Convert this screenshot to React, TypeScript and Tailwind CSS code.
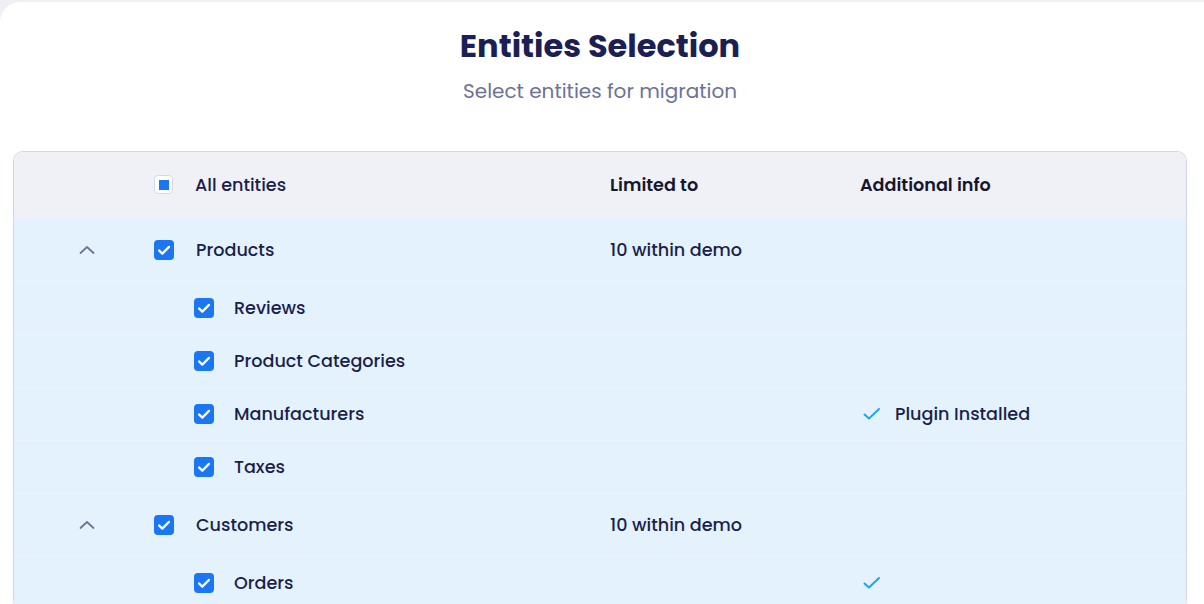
import { useState } from "react";

type Entity = {
  name: string;
  limit?: string;
  info?: string;
  showInfoCheck?: boolean;
  children?: Entity[];
};

const entities: Entity[] = [
  {
    name: "Products",
    limit: "10 within demo",
    children: [
      { name: "Reviews" },
      { name: "Product Categories" },
      { name: "Manufacturers", showInfoCheck: true, info: "Plugin Installed" },
      { name: "Taxes" },
    ],
  },
  {
    name: "Customers",
    limit: "10 within demo",
    children: [{ name: "Orders", showInfoCheck: true }],
  },
];

function CheckBox({ checked }: { checked: boolean }) {
  return (
    <span
      className={
        checked
          ? "flex h-5 w-5 shrink-0 items-center justify-center rounded-[4px] bg-[#1a76f2]"
          : "flex h-5 w-5 shrink-0 items-center justify-center rounded-[4px] border border-[#c9cdd9] bg-white"
      }
    >
      {checked && (
        <svg width="20" height="20" viewBox="0 0 20 20" fill="none">
          <path d="M5 10.4 8.3 13.6 15 6.9" stroke="white" strokeWidth="2.2" strokeLinecap="round" strokeLinejoin="round" />
        </svg>
      )}
    </span>
  );
}

function ChevronUp() {
  return (
    <svg width="16" height="10" viewBox="0 0 16 10" fill="none">
      <path d="M1.5 8 8 2l6.5 6" stroke="#6f7590" strokeWidth="1.8" strokeLinecap="round" strokeLinejoin="round" />
    </svg>
  );
}

function InfoCheck() {
  return (
    <svg width="18" height="14" viewBox="0 0 18 14" fill="none">
      <path d="M1.5 7.5 6 11.5 16 2" stroke="#1fa6ea" strokeWidth="2" strokeLinecap="round" strokeLinejoin="round" />
    </svg>
  );
}

function Row({ entity, child, open, onToggle }: { entity: Entity; child?: boolean; open?: boolean; onToggle?: () => void }) {
  return (
    <div
      className={
        child
          ? "flex h-[53px] items-center border-t border-[#ecf5fd] bg-[#e4f2fd]"
          : "flex h-[63px] items-center border-t border-[#ecf5fd] bg-[#e4f2fd]"
      }
    >
      <div className="flex w-[140px] shrink-0 pl-[65px]">
        {!child && (
          <button onClick={onToggle} className={open ? "" : "rotate-180"}>
            <ChevronUp />
          </button>
        )}
      </div>
      <div className={child ? "flex w-[456px] shrink-0 items-center gap-5 pl-10" : "flex w-[456px] shrink-0 items-center gap-[22px]"}>
        <CheckBox checked />
        <span className="text-[17.6px] font-medium text-[#1b1f4b]">{entity.name}</span>
      </div>
      <div className="w-[250px] shrink-0 text-[17.6px] font-medium text-[#1b1f4b]">{entity.limit}</div>
      <div className="flex items-center gap-[14px] pl-[3px]">
        {entity.showInfoCheck && <InfoCheck />}
        {entity.info && <span className="text-[17.6px] font-medium text-[#1b1f4b]">{entity.info}</span>}
      </div>
    </div>
  );
}

export default function App() {
  const [open, setOpen] = useState<Record<string, boolean>>({ Products: true, Customers: true });

  return (
    <div className="min-h-screen bg-[#eef0f5] pt-[2px] font-['Poppins','Inter',sans-serif]">
      <div className="min-h-[602px] rounded-tl-[20px] bg-white pl-[13px] pr-[17px]">
        <div className="pt-[24px] text-center">
          <h1 className="text-[32px] leading-10 font-bold text-[#1b2054]">Entities Selection</h1>
          <p className="mt-[11px] text-[20px] leading-7 text-[#6b7296]">Select entities for migration</p>
        </div>

        <div className="mt-[46px] overflow-hidden rounded-[10px] border border-[#d3d6e2]">
          <div className="flex h-[66px] items-center bg-[#f0f1f6]">
            <div className="w-[140px] shrink-0" />
            <div className="flex w-[456px] shrink-0 items-center gap-[22px]">
              <span className="flex h-[19px] w-[19px] items-center justify-center rounded-[4px] border border-[#d5d8e2] bg-white">
                <span className="h-[10px] w-[10px] bg-[#1a76f2]" />
              </span>
              <span className="text-[17.6px] font-medium text-[#1b1f4b]">All entities</span>
            </div>
            <div className="w-[250px] shrink-0 text-[17.6px] font-semibold text-[#15172e]">Limited to</div>
            <div className="text-[17.6px] font-semibold text-[#15172e]">Additional info</div>
          </div>

          {entities.map((e) => (
            <div key={e.name}>
              <Row entity={e} open={open[e.name]} onToggle={() => setOpen({ ...open, [e.name]: !open[e.name] })} />
              {open[e.name] && e.children?.map((c) => <Row key={c.name} entity={c} child />)}
            </div>
          ))}
        </div>
      </div>
    </div>
  );
}
